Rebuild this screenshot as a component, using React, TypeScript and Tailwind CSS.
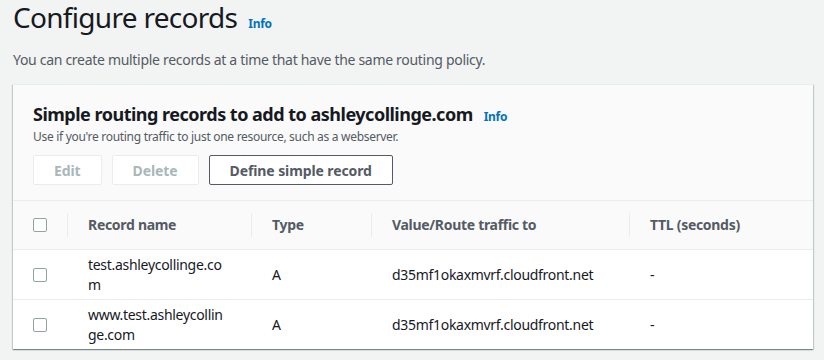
import React from 'react';

const records = [
  { name: 'test.ashleycollinge.com', type: 'A', value: 'd35mf1okaxmvrf.cloudfront.net', ttl: '-' },
  { name: 'www.test.ashleycollinge.com', type: 'A', value: 'd35mf1okaxmvrf.cloudfront.net', ttl: '-' },
];

const columns = ['Record name', 'Type', 'Value/Route traffic to', 'TTL (seconds)'];

function Checkbox() {
  return <div className="w-[14px] h-[14px] rounded-[2px] border border-[#95a2a3] bg-white" />;
}

export default function App() {
  return (
    <div className="min-h-screen bg-[#f2f3f3] text-[#16191f] text-[14px] tracking-[-0.3px] font-['Noto_Sans',sans-serif] pl-[13px]">
      {/* Page title */}
      <div className="flex items-baseline">
        <h1 className="text-[28px] leading-[34px] font-normal tracking-[-0.7px]">Configure records</h1>
        <a className="ml-[11px] text-[12px] font-bold text-[#0073bb]">Info</a>
      </div>
      <p className="mt-4 text-[14px] leading-5 text-[#545b64]">
        You can create multiple records at a time that have the same routing policy.
      </p>

      {/* Records panel */}
      <div className="mt-[14px] w-[800px] bg-white border-t border-[#eaeded] shadow-[0_1px_1px_0_rgba(0,28,36,0.3),1px_1px_1px_0_rgba(0,28,36,0.15),-1px_1px_1px_0_rgba(0,28,36,0.15)]">
        <div className="bg-[#fafafa] px-5 pt-[18px] pb-[15px]">
          <div className="flex items-baseline">
            <h2 className="text-[18px] leading-[22px] font-bold tracking-[-0.5px]">Simple routing records to add to ashleycollinge.com</h2>
            <a className="ml-[11px] text-[12px] font-bold text-[#0073bb]">Info</a>
          </div>
          <p className="mt-[3px] text-[12px] leading-4 text-[#545b64]">
            Use if you're routing traffic to just one resource, such as a webserver.
          </p>
          <div className="mt-[10px] flex gap-[10px] tracking-[-0.1px]">
            <button className="h-[30px] px-5 rounded-[2px] border border-[#eaeded] bg-white text-[14px] font-bold text-[#aab7b8]">Edit</button>
            <button className="h-[30px] px-5 rounded-[2px] border border-[#eaeded] bg-white text-[14px] font-bold text-[#aab7b8]">Delete</button>
            <button className="h-[30px] px-5 rounded-[2px] border border-[#545b64] bg-white text-[14px] font-bold text-[#545b64]">Define simple record</button>
          </div>
        </div>

        {/* Table header */}
        <div className="grid grid-cols-[54px_184px_120px_258px_1fr] h-[49px] bg-[#fafafa] border-t border-[#eaeded]">
          <div className="flex items-center pl-5">
            <Checkbox />
          </div>
          {columns.map((c) => (
            <div key={c} className="flex items-center">
              <span className="w-px h-6 bg-[#eaeded]" />
              <span className="pl-5 text-[14px] leading-5 font-bold text-[#545b64]">{c}</span>
            </div>
          ))}
        </div>

        {/* Rows */}
        {records.map((r) => (
          <div key={r.name} className="grid grid-cols-[54px_184px_120px_258px_1fr] h-[50px] bg-white border-t border-[#eaeded] leading-5">
            <div className="flex items-center pl-5">
              <Checkbox />
            </div>
            <div className="flex items-center pl-[21px] pr-[21px] break-all">{r.name}</div>
            <div className="flex items-center pl-[21px]">{r.type}</div>
            <div className="flex items-center pl-[21px]">{r.value}</div>
            <div className="flex items-center pl-[21px]">{r.ttl}</div>
          </div>
        ))}
      </div>
    </div>
  );
}
